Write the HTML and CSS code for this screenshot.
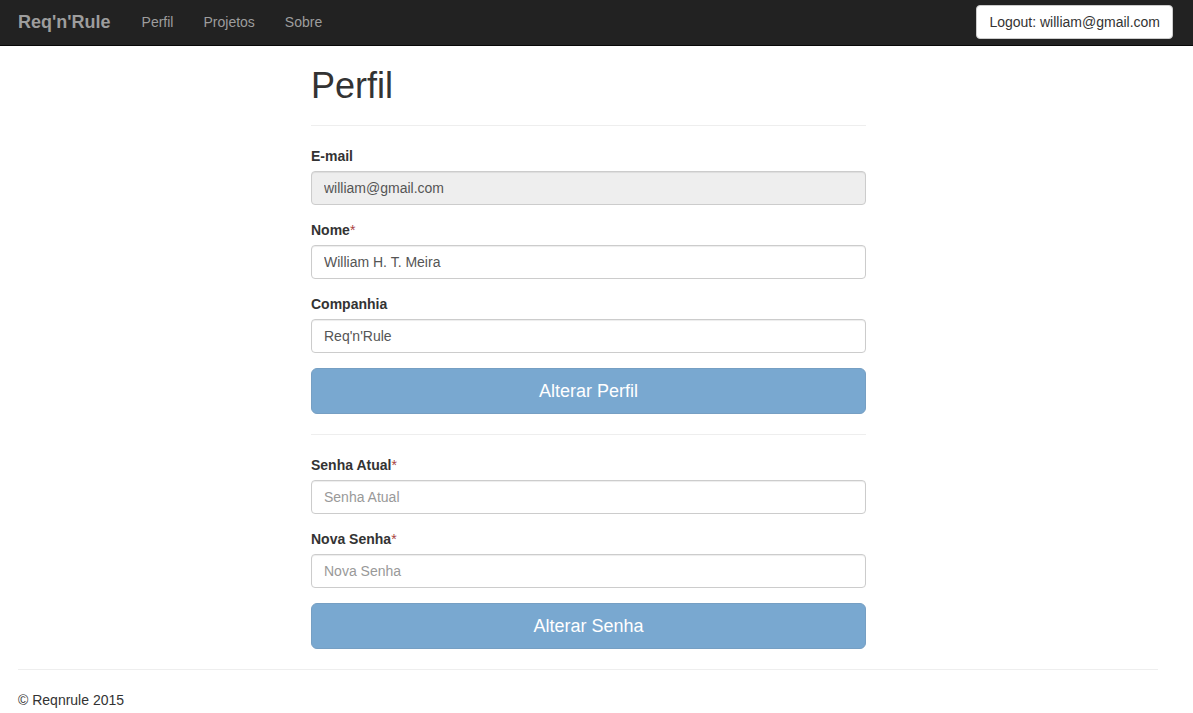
FILE: index.html
```html
<!DOCTYPE html>
<html lang="pt">
<head>
<meta charset="utf-8">
<title>Perfil - Req'n'Rule</title>
<link rel="stylesheet" href="styles.css">
</head>
<body>
<nav class="navbar">
  <div class="nav-left">
    <a class="brand" href="#">Req'n'Rule</a>
    <ul class="nav-links">
      <li><a href="#">Perfil</a></li>
      <li><a href="#">Projetos</a></li>
      <li><a href="#">Sobre</a></li>
    </ul>
  </div>
  <button class="btn-logout" type="button">Logout: william@gmail.com</button>
</nav>

<main class="content">
  <div class="page-header">
    <h1 class="page-title">Perfil</h1>
  </div>
  <form class="form">
    <div class="form-group">
      <label class="label">E-mail</label>
      <input class="input" type="text" value="william@gmail.com" disabled>
    </div>
    <div class="form-group">
      <label class="label">Nome<span class="req">*</span></label>
      <input class="input" type="text" value="William H. T. Meira">
    </div>
    <div class="form-group">
      <label class="label">Companhia</label>
      <input class="input" type="text" value="Req'n'Rule">
    </div>
    <button class="btn-primary" type="button" disabled>Alterar Perfil</button>
  </form>
  <hr class="divider">
  <form class="form">
    <div class="form-group">
      <label class="label">Senha Atual<span class="req">*</span></label>
      <input class="input" type="password" placeholder="Senha Atual">
    </div>
    <div class="form-group">
      <label class="label">Nova Senha<span class="req">*</span></label>
      <input class="input" type="password" placeholder="Nova Senha">
    </div>
    <button class="btn-primary" type="button" disabled>Alterar Senha</button>
  </form>
</main>

<footer class="footer">
  <hr class="footer-rule">
  <p class="copyright">© Reqnrule 2015</p>
</footer>
</body>
</html>
```

FILE: styles.css
```css
* { box-sizing: border-box; }

html, body {
  margin: 0;
  padding: 0;
  background: #fff;
}

body {
  font-family: "Liberation Sans", Arial, Helvetica, sans-serif;
  font-size: 14px;
  line-height: 20px;
  color: #333;
}

.navbar {
  height: 46px;
  background: #222;
  border-bottom: 1px solid #080808;
  display: flex;
  align-items: center;
  justify-content: space-between;
  padding: 0 20px 2px 18px;
}

.nav-left {
  display: flex;
  align-items: center;
}

.brand {
  font-size: 18px;
  font-weight: bold;
  color: #9d9d9d;
  text-decoration: none;
  line-height: 20px;
  margin-right: 31px;
}

.nav-links {
  list-style: none;
  margin: 0;
  padding: 0;
  display: flex;
  gap: 30px;
}

.nav-links a {
  color: #9d9d9d;
  text-decoration: none;
  font-size: 14px;
}

.btn-logout {
  font-family: inherit;
  font-size: 14px;
  line-height: 20px;
  color: #333;
  background: #fff;
  border: 1px solid #ccc;
  border-radius: 4px;
  padding: 6px 12px;
  height: 34px;
}

.content {
  width: 555px;
  margin-left: 311px;
  padding-top: 20px;
}

.page-header {
  padding-bottom: 9px;
  margin-bottom: 20px;
  border-bottom: 1px solid #eee;
}

.page-title {
  font-size: 36px;
  font-weight: 500;
  line-height: 39.6px;
  margin: 0 0 10px;
  color: #333;
}

.form {
  margin: 0;
}

.form-group {
  margin-bottom: 15px;
}

.label {
  display: block;
  font-weight: bold;
  margin-bottom: 5px;
  max-width: 100%;
}

.req {
  color: #a94442;
  font-weight: normal;
}

.input {
  display: block;
  width: 100%;
  height: 34px;
  padding: 6px 12px;
  font-family: inherit;
  font-size: 14px;
  line-height: 20px;
  color: #555;
  background: #fff;
  border: 1px solid #ccc;
  border-radius: 4px;
  box-shadow: inset 0 1px 1px rgba(0,0,0,.075);
}

.input:disabled {
  background: #eee;
  color: #555;
  opacity: 1;
}

.input::placeholder {
  color: #999;
}

.btn-primary {
  display: block;
  width: 100%;
  height: 46px;
  padding: 10px 16px;
  font-family: inherit;
  font-size: 18px;
  line-height: 24px;
  color: #fff;
  background: #337ab7;
  border: 1px solid #2e6da4;
  border-radius: 6px;
  opacity: .65;
}

.divider {
  margin: 20px 0;
  border: 0;
  border-top: 1px solid #eee;
}

.footer {
  padding: 0 35px 0 18px;
}

.footer-rule {
  margin: 20px 0;
  border: 0;
  border-top: 1px solid #eee;
}

.copyright {
  margin: 0;
}
```
